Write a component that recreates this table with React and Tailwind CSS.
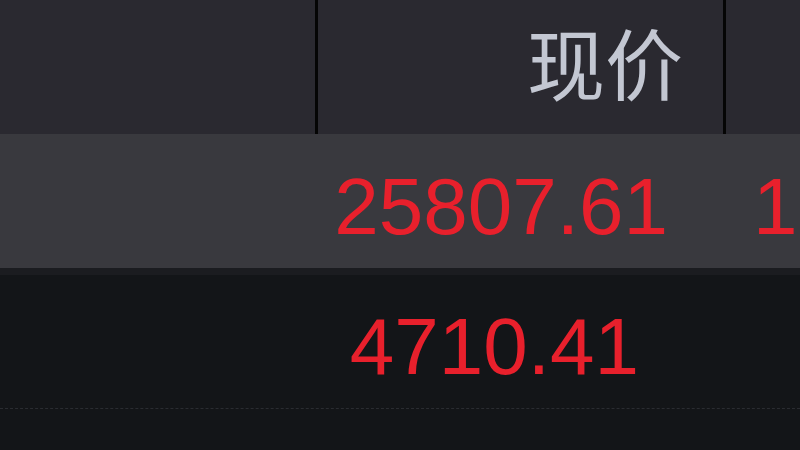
export default function App() {
  const num = { fontFamily: '"Liberation Sans", Arial, sans-serif' };
  const cjk = { fontFamily: '"Noto Sans CJK SC", "Noto Sans", sans-serif' };
  return (
    <div className="w-[800px] h-[450px] overflow-hidden bg-[#131518]">
      {/* header */}
      <div className="flex h-[134px] bg-[#2a2930]">
        <div className="w-[315px] shrink-0" />
        <div className="w-[408px] shrink-0 border-l-[3px] border-[#050505] flex items-center justify-end pr-[40px] pb-[12px]">
          <span className="text-[78px] leading-none text-[#c3c7d2]" style={cjk}>现价</span>
        </div>
        <div className="flex-1 border-l-[3px] border-[#050505]" />
      </div>
      {/* row 1 */}
      <div className="flex h-[141px] bg-[#39393e] border-b-[7px] border-[#1b1c20]">
        <div className="w-[318px] shrink-0" />
        <div className="w-[408px] shrink-0 flex items-center justify-end pr-[58px] pt-[12px]">
          <span className="text-[80px] leading-none text-[#e8202c]" style={num}>25807.61</span>
        </div>
        <div className="flex-1 flex items-center pl-[27px] pt-[12px]">
          <span className="text-[80px] leading-none text-[#e8202c]" style={num}>1</span>
        </div>
      </div>
      {/* row 2 */}
      <div className="flex h-[134px] bg-[#131518] border-b border-dashed border-[#2a2c31]">
        <div className="w-[318px] shrink-0" />
        <div className="w-[408px] shrink-0 flex items-center justify-end pr-[87px] pt-[10px]">
          <span className="text-[80px] leading-none text-[#e8202c]" style={num}>4710.41</span>
        </div>
        <div className="flex-1" />
      </div>
    </div>
  );
}
